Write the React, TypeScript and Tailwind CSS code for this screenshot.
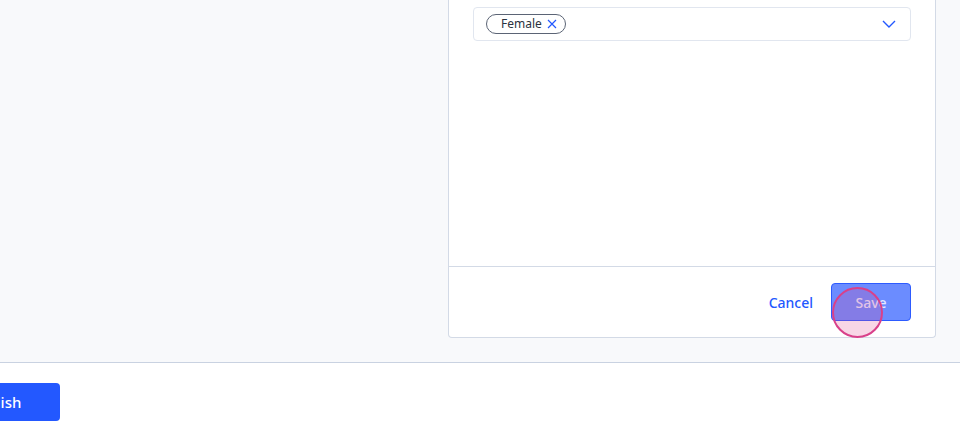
import React from "react";

export default function App() {
  return (
    <div className="w-[960px] h-[441px] bg-white overflow-hidden" style={{ fontFamily: '"Noto Sans", "Open Sans", sans-serif' }}>
      <div className="h-[363px] bg-[#f8f9fb] border-b border-[#c9d2e1] flex justify-end pr-[24px]">
        <div className="w-[488px] h-[338px] bg-white border border-t-0 border-[#d3dae6] rounded-b-[4px] flex flex-col">
          <div className="flex-1 px-[24px] pt-[7px]">
            <div className="h-[34px] border border-[#e1e6ef] rounded-[4px] flex items-center pl-[12px] pr-[14px]">
              <div className="h-[20px] border border-[#5b6475] rounded-full flex items-center pl-[14px] pr-[8px] gap-[5px]">
                <span className="text-[12px] text-[#2b3340] leading-none">Female</span>
                <svg width="10" height="10" viewBox="0 0 10 10" className="text-[#2358ff]">
                  <path d="M1 1 L9 9 M9 1 L1 9" stroke="currentColor" strokeWidth="1.2" fill="none" />
                </svg>
              </div>
              <div className="flex-1" />
              <svg width="14" height="8" viewBox="0 0 14 8" className="text-[#2358ff]">
                <path d="M1 1 L7 7 L13 1" stroke="currentColor" strokeWidth="1.4" fill="none" />
              </svg>
            </div>
          </div>
          <div className="h-[71px] border-t border-[#d3dae6] flex items-center justify-end pr-[24px] gap-[18px]">
            <button className="text-[14px] font-medium text-[#2358ff]">Cancel</button>
            <div className="relative">
              <button className="w-[80px] h-[38px] rounded-[4px] bg-[#6b8cff] border border-[#2d5bff] text-[14px] font-medium text-[#e3e8ff]">
                Save
              </button>
              <div className="absolute left-[1px] top-[4px] w-[51px] h-[51px] rounded-full border-2 border-[#d9408a] bg-[rgba(225,70,140,0.22)]" />
            </div>
          </div>
        </div>
      </div>
      <div className="pt-[20px]">
        <button className="ml-[-70px] w-[130px] h-[38px] rounded-[4px] bg-[#2358ff] text-white text-[15px] font-medium flex items-center justify-center">
          Publish
        </button>
      </div>
    </div>
  );
}
